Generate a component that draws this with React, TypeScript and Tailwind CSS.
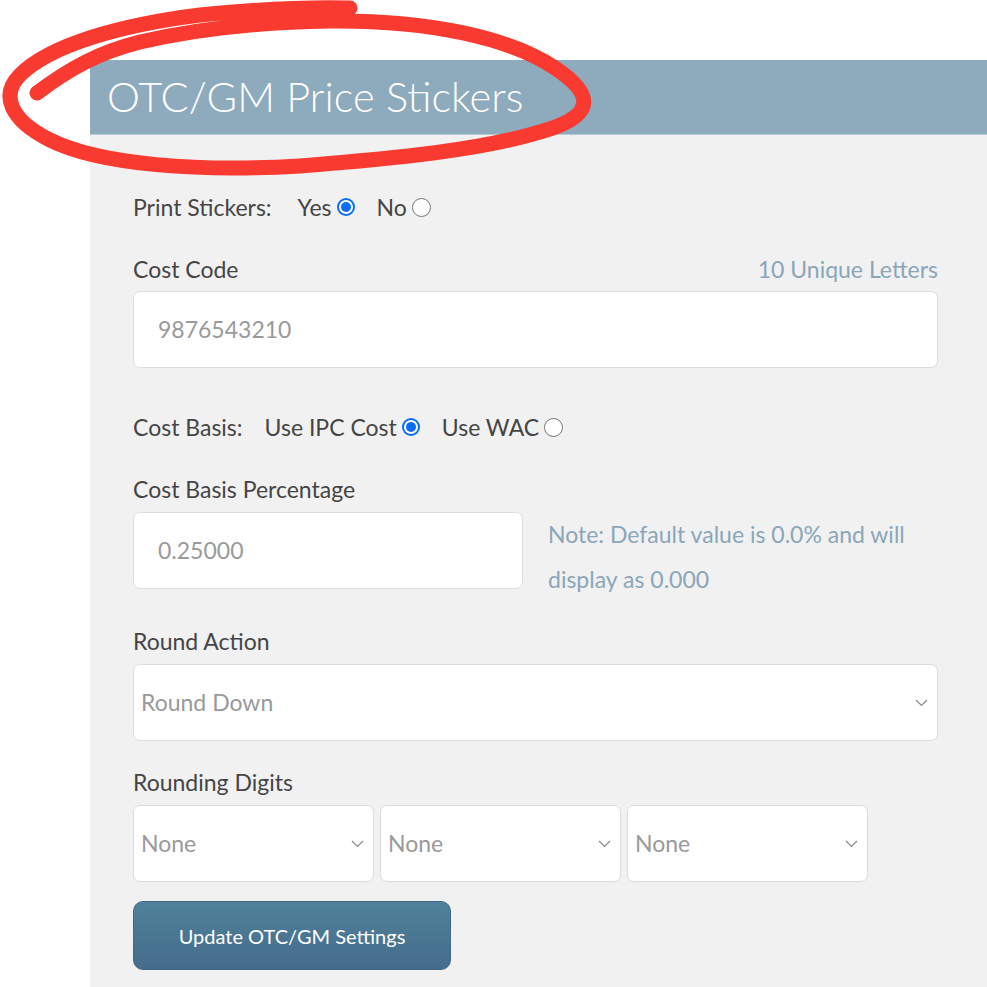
import React from "react";

const font = { fontFamily: "Lato, 'Noto Sans', sans-serif" };

function Radio({ checked }: { checked: boolean }) {
  return checked ? (
    <span className="inline-flex h-[18px] w-[18px] items-center justify-center rounded-full bg-[#0b6cf7]">
      <span className="flex h-[14px] w-[14px] items-center justify-center rounded-full bg-white">
        <span className="h-[10px] w-[10px] rounded-full bg-[#0b6cf7]" />
      </span>
    </span>
  ) : (
    <span className="inline-block h-[19px] w-[19px] rounded-full border border-[#767676] bg-white" />
  );
}

function Chevron() {
  return (
    <svg width="13" height="8" viewBox="0 0 13 8" fill="none">
      <path d="M1 1l5.5 5.5L12 1" stroke="#8a8a8a" strokeWidth="1.2" />
    </svg>
  );
}

function Select({ value, className }: { value: string; className: string }) {
  return (
    <div
      className={`flex h-[77px] items-center justify-between rounded-[7px] border border-[#dcdcdc] bg-white pl-[7px] pr-[9px] text-[23px] text-[#9a9a9a] ${className}`}
    >
      <span>{value}</span>
      <Chevron />
    </div>
  );
}

export default function App() {
  return (
    <div className="relative h-[987px] w-[987px] overflow-hidden bg-white text-[#454545]" style={font}>
      <div className="pl-[90px] pt-[60px]">
        <div className="flex h-[74px] items-center bg-[#8eaabd] pl-[17px]">
          <span className="text-[41.6px] font-light leading-none text-white">OTC/GM Price Stickers</span>
        </div>
        <div className="h-[900px] border-t border-[#b9cbd6] bg-[#f1f1f1] pl-[43px] pr-[49px] pt-[57px] text-[23px]">
          <div className="flex h-[30px] items-center">
            <span>Print Stickers:</span>
            <span className="ml-[26px]">Yes</span>
            <span className="ml-[5px] flex"><Radio checked /></span>
            <span className="ml-[22px]">No</span>
            <span className="ml-[5px] flex"><Radio checked={false} /></span>
          </div>

          <div className="mt-[32px] flex h-[30px] items-center justify-between">
            <span>Cost Code</span>
            <span className="text-[#8aa6b9]">10 Unique Letters</span>
          </div>
          <div className="mt-[7px] flex h-[77px] items-center rounded-[7px] border border-[#dcdcdc] bg-white pl-[24px] text-[#9a9a9a]">
            9876543210
          </div>

          <div className="mt-[44px] flex h-[30px] items-center">
            <span>Cost Basis:</span>
            <span className="ml-[22px]">Use IPC Cost</span>
            <span className="ml-[5px] flex"><Radio checked /></span>
            <span className="ml-[22px]">Use WAC</span>
            <span className="ml-[5px] flex"><Radio checked={false} /></span>
          </div>

          <div className="mt-[32px] flex h-[30px] items-center">Cost Basis Percentage</div>
          <div className="mt-[8px] flex h-[77px] items-start">
            <div className="flex h-[77px] w-[390px] shrink-0 items-center rounded-[7px] border border-[#dcdcdc] bg-white pl-[24px] text-[#9a9a9a]">
              0.25000
            </div>
            <div className="ml-[25px] leading-[45px] text-[#8aa6b9]">
              Note: Default value is 0.0% and will
              <br />
              display as 0.000
            </div>
          </div>

          <div className="mt-[37px] flex h-[30px] items-center">Round Action</div>
          <Select value="Round Down" className="mt-[8px]" />

          <div className="mt-[26px] flex h-[30px] items-center">Rounding Digits</div>
          <div className="mt-[8px] flex gap-[6px]">
            <Select value="None" className="w-[241px]" />
            <Select value="None" className="w-[241px]" />
            <Select value="None" className="w-[241px]" />
          </div>

          <button className="mt-[19px] flex h-[69px] w-[318px] items-center justify-center rounded-[10px] border border-[#41698a] bg-gradient-to-b from-[#4f819a] to-[#456c8b] text-[20px] text-white">
            Update OTC/GM Settings
          </button>
        </div>
      </div>

      <svg className="pointer-events-none absolute left-0 top-0" width="987" height="987" viewBox="0 0 987 987" fill="none">
        <path
          d="M37 93 C 70 68, 100 52, 140 42 C 200 28, 260 22, 330 21 C 430 20, 510 38, 555 68 C 600 98, 590 118, 540 132 C 480 150, 400 158, 300 166 C 200 172, 100 165, 50 140 C 10 120, 0 95, 20 75 C 50 45, 120 25, 200 15 C 260 9, 310 7, 350 8"
          stroke="#f93a30"
          strokeWidth="15"
          strokeLinecap="round"
          strokeLinejoin="round"
        />
      </svg>
    </div>
  );
}
